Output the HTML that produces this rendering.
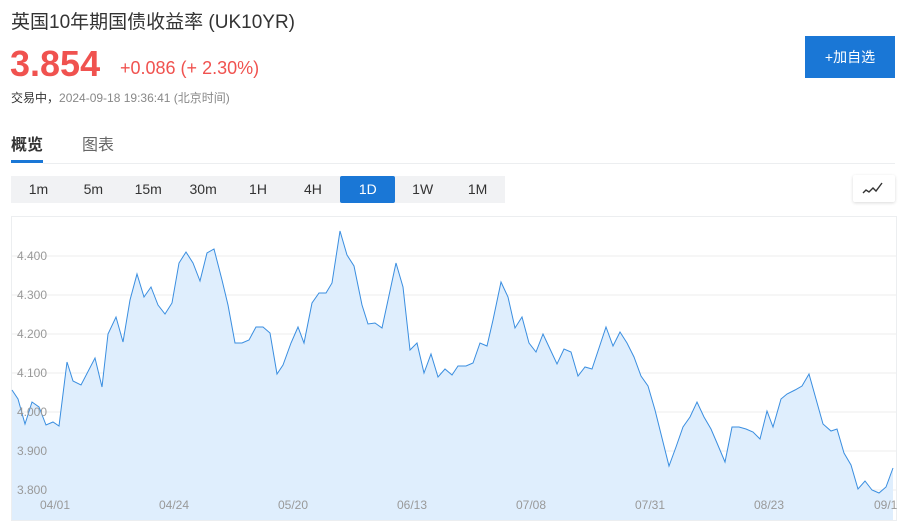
<!DOCTYPE html>
<html><head><meta charset="utf-8"><style>
body{margin:0;width:916px;height:532px;background:#fff;font-family:"Liberation Sans","Noto Sans CJK SC",sans-serif;position:relative;overflow:hidden;color:#333}
.a{position:absolute;white-space:nowrap}
.iv{position:absolute;top:176px;left:11px;width:494px;height:27px;background:#f1f2f4;display:flex}
.iv div{width:55px;text-align:center;line-height:27px;font-size:14px;color:#333}
.iv .on{background:#1a77d6;color:#fff;border-radius:2px}
</style></head><body>
<div class="a" style="left:11px;top:7px;font-size:19px;color:#333">英国10年期国债收益率 (UK10YR)</div>
<div class="a" style="left:10px;top:43px;font-size:36px;font-weight:bold;color:#f0524f">3.854</div>
<div class="a" style="left:120px;top:58px;font-size:18px;color:#f0524f">+0.086 (+ 2.30%)</div>
<div class="a" style="left:11px;top:89px;font-size:12px;color:#333">交易中，<span style="color:#888">2024-09-18 19:36:41 (北京时间)</span></div>
<div class="a" style="left:805px;top:36px;width:90px;height:42px;background:#1a77d6;color:#fff;font-size:14px;line-height:42px;text-align:center">+加自选</div>
<div class="a" style="left:11px;top:131px;font-size:16px;font-weight:bold;color:#333">概览</div>
<div class="a" style="left:82px;top:131px;font-size:16px;color:#666">图表</div>
<div class="a" style="left:11px;top:160px;width:32px;height:3px;background:#1a77d6"></div>
<div class="a" style="left:43px;top:163px;width:852px;height:1px;background:#eceef0"></div>
<div class="iv"><div>1m</div><div>5m</div><div>15m</div><div>30m</div><div>1H</div><div>4H</div><div class="on">1D</div><div>1W</div><div>1M</div></div>
<div class="a" style="left:853px;top:175px;width:42px;height:27px;background:#fff;box-shadow:0 1px 3px rgba(0,0,0,.15);border-radius:2px">
<svg width="42" height="27"><path d="M10 18 L13 15 L16 17 L20 13 L23 16 L29 8" fill="none" stroke="#333" stroke-width="1.4"/></svg></div>
<svg class="a" style="left:0;top:0" width="916" height="532">
<rect x="11.5" y="216.5" width="885" height="304" fill="none" stroke="#eceef0"/>
<g stroke="#ececec" stroke-width="1">
<line x1="12" x2="896" y1="256" y2="256"/><line x1="12" x2="896" y1="295" y2="295"/><line x1="12" x2="896" y1="334" y2="334"/><line x1="12" x2="896" y1="373" y2="373"/><line x1="12" x2="896" y1="412" y2="412"/><line x1="12" x2="896" y1="451" y2="451"/><line x1="12" x2="896" y1="490" y2="490"/></g>
<path d="M12 390 L18 399 L25 424 L32 402 L39 407 L46 425 L53 422 L59 426 L67 362 L73 381 L81 385 L95 358 L102 387 L108 334 L116 317 L123 342 L130 300 L137 274 L144 297 L151 287 L158 305 L165 314 L172 303 L179 263 L186 252 L193 263 L200 281 L207 253 L214 249 L222 280 L228 305 L235 343 L242 343 L249 340 L256 327 L263 327 L270 333 L277 374 L283 365 L291 343 L298 327 L304 343 L312 303 L319 293 L326 293 L332 283 L340 231 L347 255 L354 266 L362 305 L368 324 L375 323 L382 328 L396 263 L403 287 L410 350 L417 343 L424 373 L431 354 L438 377 L445 369 L452 375 L458 366 L466 366 L473 363 L480 343 L487 346 L493 320 L501 282 L508 297 L515 328 L522 317 L529 343 L536 352 L543 334 L550 349 L557 364 L564 349 L571 352 L578 376 L585 367 L592 369 L606 327 L613 346 L620 332 L627 343 L634 357 L641 376 L648 386 L655 410 L669 466 L676 447 L683 427 L690 417 L697 402 L704 417 L711 429 L717 443 L725 462 L732 427 L739 427 L746 429 L753 432 L760 439 L767 411 L773 427 L781 399 L787 394 L795 390 L802 386 L809 374 L816 399 L823 424 L831 431 L837 429 L844 453 L851 465 L858 489 L865 481 L872 490 L879 493 L886 487 L893 468 L893 520 L12 520 Z" fill="#dfeefd" stroke="none"/>
<path d="M12 390 L18 399 L25 424 L32 402 L39 407 L46 425 L53 422 L59 426 L67 362 L73 381 L81 385 L95 358 L102 387 L108 334 L116 317 L123 342 L130 300 L137 274 L144 297 L151 287 L158 305 L165 314 L172 303 L179 263 L186 252 L193 263 L200 281 L207 253 L214 249 L222 280 L228 305 L235 343 L242 343 L249 340 L256 327 L263 327 L270 333 L277 374 L283 365 L291 343 L298 327 L304 343 L312 303 L319 293 L326 293 L332 283 L340 231 L347 255 L354 266 L362 305 L368 324 L375 323 L382 328 L396 263 L403 287 L410 350 L417 343 L424 373 L431 354 L438 377 L445 369 L452 375 L458 366 L466 366 L473 363 L480 343 L487 346 L493 320 L501 282 L508 297 L515 328 L522 317 L529 343 L536 352 L543 334 L550 349 L557 364 L564 349 L571 352 L578 376 L585 367 L592 369 L606 327 L613 346 L620 332 L627 343 L634 357 L641 376 L648 386 L655 410 L669 466 L676 447 L683 427 L690 417 L697 402 L704 417 L711 429 L717 443 L725 462 L732 427 L739 427 L746 429 L753 432 L760 439 L767 411 L773 427 L781 399 L787 394 L795 390 L802 386 L809 374 L816 399 L823 424 L831 431 L837 429 L844 453 L851 465 L858 489 L865 481 L872 490 L879 493 L886 487 L893 468" fill="none" stroke="#3a8ee0" stroke-width="1"/>
<g font-family="Liberation Sans,sans-serif" font-size="12" fill="#999">
<text x="17" y="260">4.400</text><text x="17" y="299">4.300</text><text x="17" y="338">4.200</text><text x="17" y="377">4.100</text><text x="17" y="416">4.000</text><text x="17" y="455">3.900</text><text x="17" y="494">3.800</text>
<g text-anchor="middle"><text x="55" y="509">04/01</text><text x="174" y="509">04/24</text><text x="293" y="509">05/20</text><text x="412" y="509">06/13</text><text x="531" y="509">07/08</text><text x="650" y="509">07/31</text><text x="769" y="509">08/23</text></g>
<text x="874" y="509">09/1</text></g>
</svg>
</body></html>
